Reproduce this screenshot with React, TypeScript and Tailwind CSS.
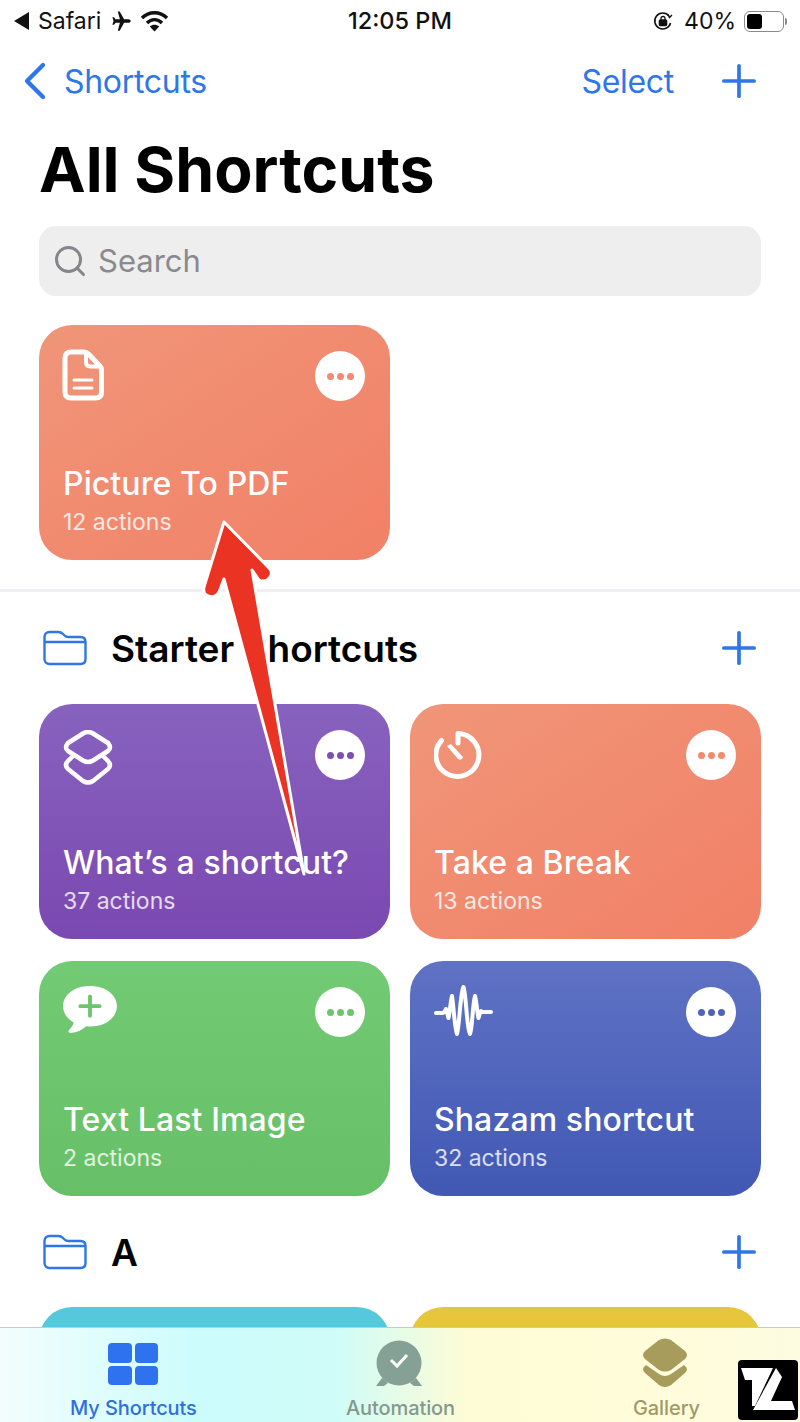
import React from "react";
import { ChevronLeft, Plus, Search } from "lucide-react";

type ShortcutCardProps = {
  title: string;
  actions: string;
  gradient: string;
  dot: string;
  icon: React.ReactNode;
};

const DocIcon = () => (
  <svg className="-ml-[1px]" width="42" height="52" viewBox="0 0 42 52" fill="none" stroke="#fff" strokeWidth="5" strokeLinejoin="round" strokeLinecap="round">
    <path d="M9 3h13c2 0 3 .5 4.500 2l11 11.500c1.500 1.500 2 2.500 2 4.500v22c0 4-2 6-6 6H9c-4 0-6-2-6-6V9c0-4 2-6 6-6z" />
    <path d="M24 4v9c0 3 1.500 4.500 4.500 4.500H38" strokeWidth="4" />
    <path d="M12 31h18M12 39h18" strokeWidth="3" />
  </svg>
);

const LayersIcon = () => (
  <svg className="mt-[2px]" width="50" height="56" viewBox="0 0 50 56" fill="none" stroke="#fff" strokeWidth="4.500" strokeLinejoin="round" strokeLinecap="round">
    <path d="M20 3.500q5-3 10 0l15 9.500q4 5 0 8l-15 9.500q-5 3-10 0l-15-9.500q-4-3 0-8z" />
    <path d="M9 27l-4 4q-4 4 0 8l15 12q5 3 10 0l15-12q4-4 0-8l-4-4" />
  </svg>
);

const TimerIcon = () => (
  <svg className="mt-[2px]" width="50" height="50" viewBox="0 0 50 50" fill="none" stroke="#fff" strokeLinecap="round">
    <path d="M24 13V3.500a21.500 21.500 0 1 1-16.500 7" strokeWidth="5" strokeLinejoin="round" />
    <path d="M13 16l4-2 12 13q-1 4-5 2z" fill="#fff" stroke="none" />
  </svg>
);

const BubbleIcon = () => (
  <svg className="-ml-[1px]" width="56" height="50" viewBox="0 0 58 52">
    <path fill="#fff" d="M29 1C13 1 1 10 1 22c0 7 4 13 11 17-.5 3-3 6-5 8-1 1.500 0 3 2 3 6-.5 12-3 16-7 1.500.1 2.500.2 4 .2 16 0 28-9.200 28-21.200S45 1 29 1z" />
    <path d="M29 12v20M19 22h20" stroke="#6bc56d" strokeWidth="4" strokeLinecap="round" />
  </svg>
);

const WaveIcon = () => (
  <svg width="60" height="56" viewBox="0 0 60 56" fill="none" stroke="#fff" strokeWidth="4" strokeLinecap="round" strokeLinejoin="round">
    <path d="M2 28h6c2 0 3-1 4-4 1 2 1.500 6 2.500 9 1.500-6 2-17 3.500-22 1.500 8 2.500 32 5 38 2.500-8 3-40 6.500-47 3 9 3 41 6.500 47 2.500-6 2.500-30 5-38 1.500 5 2 16 3.500 22 1-3 1.500-6 2.500-7 1 1 1 1 2 1h8" />
  </svg>
);

function ShortcutCard({ title, actions, gradient, dot, icon }: ShortcutCardProps) {
  return (
    <div className={`h-[235px] rounded-[33px] flex flex-col pl-[24px] pr-[25px] ${gradient}`}>
      <div className="flex justify-between items-start pt-[24px] h-[128px]">
        <div className="h-[60px]">{icon}</div>
        <div className="w-[50px] h-[50px] rounded-full bg-white flex items-center justify-center gap-[3px] mt-[2px]">
          <span className={`w-[7px] h-[7px] rounded-full ${dot}`} />
          <span className={`w-[7px] h-[7px] rounded-full ${dot}`} />
          <span className={`w-[7px] h-[7px] rounded-full ${dot}`} />
        </div>
      </div>
      <div className="text-white text-[32px] leading-[38px] font-medium tracking-[0.1px] whitespace-nowrap mt-[12px]">{title}</div>
      <div className="text-white/80 text-[23px] leading-[30px] mt-[4px]">{actions}</div>
    </div>
  );
}

const FolderIcon = () => (
  <svg width="44" height="36" viewBox="0 0 44 36" fill="none" stroke="#2f76e8" strokeWidth="2.400" strokeLinejoin="round">
    <path d="M1.500 7c0-3 2-5 5-5h9c2 0 3 .5 4.500 2l1.500 1.500c1 1 2 1.500 4 1.500h12c3 0 5 2 5 5v17c0 3-2 5-5 5h-31c-3 0-5-2-5-5V7z" />
    <path d="M1.500 12h41" />
  </svg>
);

function FolderRow({ name, className }: { name: string; className: string }) {
  return (
    <div className={`flex items-center pl-[43px] pr-[35px] ${className}`}>
      <FolderIcon />
      <span className="ml-[24px] pt-[2px] text-[37px] font-semibold text-black flex-1">{name}</span>
      <Plus size={52} strokeWidth={1.700} className="text-[#2f76e8]" />
    </div>
  );
}

function StatusBar() {
  return (
    <div className="h-[42px] flex items-center relative text-[#111] text-[23px]">
      <div className="flex items-center pl-[14px]">
        <svg width="15" height="18" viewBox="0 0 15 18"><path d="M15 0v18L0 9z" fill="#111" /></svg>
        <span className="ml-[9px]">Safari</span>
        <svg className="ml-[10px]" width="22" height="22" viewBox="0 0 24 24"><path fill="#111" d="M21.500 12c0-1.200-1.200-2-2.500-2h-4.700L9.500 1.500H7.400L9.700 10H5L3.300 7.800H1.500L2.800 12l-1.300 4.200h1.800L5 14h4.700L7.400 22.500h2.100l4.800-8.500H19c1.300 0 2.500-.8 2.500-2z" /></svg>
        <svg className="ml-[7px]" width="29" height="22" viewBox="0 0 29 22" fill="none" stroke="#111" strokeWidth="3.400"><path d="M2 8c7-7 18-7 25 0" /><path d="M7 13c4.500-4.500 10.500-4.500 15 0" /><path d="M14.500 21.500 9.800 16.500c2.800-2.400 6.600-2.400 9.400 0z" fill="#111" stroke="none" /></svg>
      </div>
      <span className="absolute left-[348px] text-[23.5px] font-medium">12:05 PM</span>
      <div className="ml-auto flex items-center pr-[13px]">
        <svg width="20" height="20" viewBox="0 0 20 20" fill="none" stroke="#111" strokeWidth="1.600"><path d="M17.500 12A8 8 0 1 1 16 5" /><path d="M15 3.500 16.500 6.500 19 4" strokeWidth="1.400" /><rect x="6.500" y="9" width="7" height="5.500" rx="1" fill="#111" /><path d="M8 9V7.500a2 2 0 0 1 4 0V9" strokeWidth="1.300" /></svg>
        <span className="ml-[11px]">40%</span>
        <div className="ml-[8px] w-[40px] h-[21px] rounded-[6px] border border-[#8a8a8a] p-[2px]">
          <div className="w-[15px] h-full rounded-[3px] bg-black" />
        </div>
        <div className="w-[2px] h-[7px] ml-[1px] rounded-r bg-[#8a8a8a]" />
      </div>
    </div>
  );
}

function TabBar() {
  return (
    <div className="absolute left-0 right-0 bottom-0 h-[95px] border-t border-[#c9c9c9] flex bg-[linear-gradient(90deg,#f3fdfd_0%,#ccfcfc_25%,#cffcf8_42%,#fdfcd6_58%,#fffdd9_80%,#fdfbe0_100%)]">
      <div className="absolute left-[108px] top-[15px] w-[50px] h-[42px] grid grid-cols-2 gap-[3px]">
        <span className="rounded-[4px] bg-[#2f72f0]" />
        <span className="rounded-[4px] bg-[#2f72f0]" />
        <span className="rounded-[4px] bg-[#2f72f0]" />
        <span className="rounded-[4px] bg-[#2f72f0]" />
      </div>
      <svg className="absolute left-[375px] top-[12px]" width="48" height="48" viewBox="0 0 48 48">
        <path fill="#85a094" d="M1 46l6-8 6 5-4 3zM47 46l-6-8-6 5 4 3z" />
        <circle cx="24" cy="23" r="22.500" fill="#85a094" />
        <path d="M16 20l6 6 10-11" fill="none" stroke="#fff" strokeWidth="3" />
      </svg>
      <svg className="absolute left-[642px] top-[10px]" width="46" height="50" viewBox="0 0 46 50">
        <path fill="#a89c5c" d="M4 27l-1 1q-4 3 0 7l14 12q6 4 12 0l14-12q4-4 0-7l-1-1-13 9q-6 4-12 0z" />
        <path fill="#a89c5c" d="M17 2q6-3 12 0l14 11q4 4 0 8l-14 11q-6 3-12 0l-14-11q-4-4 0-8z" />
      </svg>
      <div className="absolute left-[70px] bottom-[2px] text-[20px] leading-[24px] font-medium tracking-[-0.1px] text-[#2f6fdd]">My Shortcuts</div>
      <div className="absolute left-[346px] bottom-[2px] text-[20px] leading-[24px] font-medium tracking-[-0.1px] text-[#84988f]">Automation</div>
      <div className="absolute left-[633px] bottom-[2px] text-[20px] leading-[24px] font-medium tracking-[-0.1px] text-[#a09a68]">Gallery</div>
    </div>
  );
}

export default function App() {
  return (
    <div className="relative w-[800px] h-[1422px] overflow-hidden bg-white font-['Inter','Liberation_Sans',sans-serif]">
      <StatusBar />

      <div className="h-[78px] flex items-center pl-[3px] pr-[35px] text-[#2f76e8] text-[32px]">
        <ChevronLeft size={64} strokeWidth={1.600} />
        <span className="-ml-[3px] pt-[2px] tracking-[-0.3px]">Shortcuts</span>
        <span className="ml-auto mr-[39px] pt-[2px] tracking-[-0.3px]">Select</span>
        <Plus size={52} strokeWidth={1.700} />
      </div>

      <h1 className="h-[100px] pl-[39px] flex items-center text-[62.5px] font-bold text-black">All Shortcuts</h1>

      <div className="mx-[39px] mt-[6px] h-[70px] rounded-[17px] bg-[#eeeeef] flex items-center pl-[13px]">
        <Search size={36} strokeWidth={2} className="text-[#85858a]" />
        <span className="ml-[10px] text-[31px] text-[#8a8a8e]">Search</span>
      </div>

      <div className="mx-[39px] mt-[29px] grid grid-cols-2 gap-x-5">
        <ShortcutCard title="Picture To PDF" actions="12 actions" gradient="bg-gradient-to-br from-[#f09579] to-[#f18066]" dot="bg-[#f08a70]" icon={<DocIcon />} />
      </div>

      <div className="mt-[29px] h-[3px] bg-[#eff0f3]" />

      <FolderRow name="Starter Shortcuts" className="h-[112px]" />
      <div className="mx-[39px] grid grid-cols-2 gap-x-5 gap-y-[22px]">
        <ShortcutCard title="What’s a shortcut?" actions="37 actions" gradient="bg-gradient-to-b from-[#8862bf] to-[#7a48b1]" dot="bg-[#7d4fb5]" icon={<LayersIcon />} />
        <ShortcutCard title="Take a Break" actions="13 actions" gradient="bg-gradient-to-br from-[#f09579] to-[#f18066]" dot="bg-[#f08a70]" icon={<TimerIcon />} />
        <ShortcutCard title="Text Last Image" actions="2 actions" gradient="bg-gradient-to-b from-[#72cb74] to-[#67c067]" dot="bg-[#6bc56d]" icon={<BubbleIcon />} />
        <ShortcutCard title="Shazam shortcut" actions="32 actions" gradient="bg-gradient-to-b from-[#5f72c4] to-[#4158b4]" dot="bg-[#4f63ba]" icon={<WaveIcon />} />
      </div>

      <FolderRow name="A" className="h-[111px]" />
      <div className="mx-[39px] grid grid-cols-2 gap-x-5">
        <div className="h-[235px] rounded-[33px] bg-[#55c8de]" />
        <div className="h-[235px] rounded-[33px] bg-[#e6c63c]" />
      </div>

      <TabBar />

      {/* red arrow drawn over the screenshot */}
      <svg className="absolute left-[195px] top-[510px]" width="120" height="375" viewBox="0 0 120 375">
        <path d="M29 12 74 58c6 6-1 16-10 12L57 60l52 304L29 69l-5 13c-5 8-17 5-15-5z" fill="#ea3323" stroke="#fff" strokeWidth="3" strokeLinejoin="round" />
      </svg>

      {/* watermark */}
      <svg className="absolute left-[738px] top-[1360px]" width="60" height="60" viewBox="0 0 60 60">
        <rect width="60" height="60" rx="4" fill="#000" />
        <path fill="#fff" d="M3 8h32L17 46h-3V20H7z" />
        <path fill="#fff" d="M38 8l6 9-11 24h21l3 9H15z" />
      </svg>
    </div>
  );
}
